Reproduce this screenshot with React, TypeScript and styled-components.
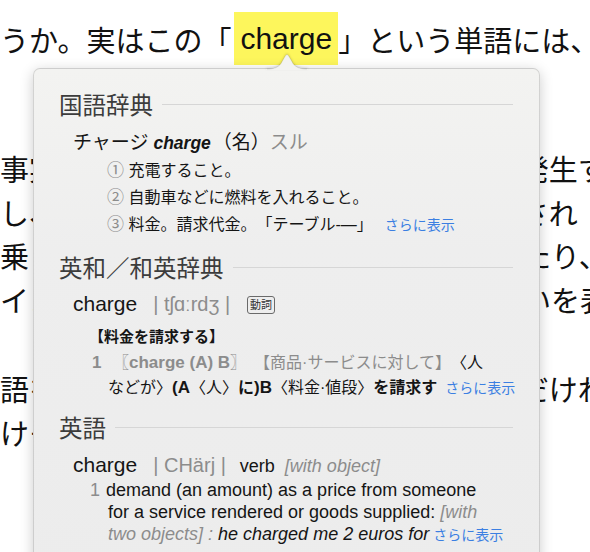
import React from "react";
import styled, { createGlobalStyle } from "styled-components";

const C = {
  ink: "#151515",
  head: "#3c3c3c",
  gray: "#8c8c8c",
  rule: "#d6d6d6",
  link: "#3b7fe2",
  yellow: "#fdf65c",
  popTop: "#f3f3f1",
};

const GlobalStyle = createGlobalStyle`
  html, body { margin: 0; padding: 0; background: #ffffff; }
  body {
    font-family: "Liberation Sans", "Noto Sans CJK JP", "DejaVu Sans", sans-serif;
    color: ${C.ink};
    text-spacing-trim: space-all;
  }
`;

const Page = styled.div`
  position: relative;
  width: 590px;
  height: 552px;
  overflow: hidden;
  background: #fff;
`;

/* ---------- background article ---------- */
const Article = styled.div`
  display: flex;
  flex-direction: column;
  padding-top: 12px;
  font-size: 29px;
  color: #111;
`;

const LeadLine = styled.div`
  display: flex;
  align-items: center;
  height: 53px;
  white-space: nowrap;
`;

const Highlight = styled.span`
  display: flex;
  align-items: center;
  height: 53px;
  margin-left: 3px;
  padding: 0 6px;
  background: ${C.yellow};
  font-size: 30px;
`;

const Line = styled.div<{ $gap?: number }>`
  height: 43.5px;
  line-height: 43.5px;
  white-space: nowrap;
  margin-top: ${(p) => p.$gap ?? 0}px;
`;

/* ---------- popover ---------- */
const Popover = styled.div`
  position: absolute;
  left: 33px;
  top: 68px;
  width: 507px;
  height: 520px;
  box-sizing: border-box;
  padding: 20px 26px 0 25px;
  border: 1px solid rgba(0, 0, 0, 0.13);
  border-radius: 7px;
  background: linear-gradient(180deg, ${C.popTop} 0%, #eeeeee 35%, #ececec 100%);
  box-shadow: 0 3px 14px rgba(0, 0, 0, 0.2);
`;

const Arrow = styled.svg`
  position: absolute;
  left: 233px;
  top: -16px;
  width: 40px;
  height: 17px;
  overflow: visible;
  filter: drop-shadow(0 -0.5px 0.8px rgba(0, 0, 0, 0.16));
`;

const SectionTitle = styled.div<{ $mt?: number }>`
  display: flex;
  align-items: center;
  gap: 9px;
  height: 30px;
  margin-top: ${(p) => p.$mt ?? 0}px;
  font-size: 23.5px;
  color: ${C.head};
  white-space: nowrap;
  &::after {
    content: "";
    flex: 1;
    height: 1px;
    margin-top: 1px;
    background: ${C.rule};
  }
`;

const EntryRow = styled.div<{ $mt: number; $h: number }>`
  margin-top: ${(p) => p.$mt}px;
  height: ${(p) => p.$h}px;
  line-height: ${(p) => p.$h}px;
  padding-left: 14px;
  white-space: nowrap;
`;

const Kana = styled.span<{ $muted?: boolean }>`
  font-size: 19px;
  color: ${(p) => (p.$muted ? C.gray : C.ink)};
`;

const HeadItalic = styled.span`
  font-size: 17.5px;
  font-weight: 700;
  font-style: italic;
  margin: 0 2px 0 5px;
`;

const SenseList = styled.div`
  padding-left: 48px;
  font-size: 16px;
  line-height: 27px;
`;

const Sense = styled.div`
  white-space: nowrap;
`;

const Circ = styled.span`
  font-size: 17px;
  color: ${C.gray};
`;

const More = styled.span<{ $ml: number }>`
  margin-left: ${(p) => p.$ml}px;
  font-size: 14px;
  font-style: normal;
  font-weight: 400;
  color: ${C.link};
`;

const Headword = styled.span`
  font-size: 21px;
`;

const Pron = styled.span`
  margin-left: 16px;
  font-size: 20px;
  color: ${C.gray};
`;

const Badge = styled.span`
  display: inline-block;
  margin-left: 17px;
  padding: 1px 2px;
  font-size: 11px;
  line-height: 14px;
  border: 1px solid #6a6a6a;
  border-radius: 3px;
  color: #333;
  vertical-align: 2px;
`;

const Pos = styled.span`
  margin-left: 14px;
  font-size: 18px;
`;

const Gram = styled.span<{ $ml?: number }>`
  margin-left: ${(p) => p.$ml ?? 0}px;
  font-size: 18px;
  font-style: italic;
  color: ${C.gray};
`;

const SenseLabel = styled.div`
  margin-top: 5px;
  height: 26px;
  line-height: 26px;
  padding-left: 30px;
  font-size: 15px;
  font-weight: 700;
`;

const DefLine = styled.div<{ $size: number; $lh: number; $mt?: number }>`
  margin-top: ${(p) => p.$mt ?? 0}px;
  padding-left: 49px;
  font-size: ${(p) => p.$size}px;
  line-height: ${(p) => p.$lh}px;
  white-space: nowrap;
`;

const Num = styled.span`
  display: inline-block;
  width: 21px;
  margin-left: -16px;
  font-size: 17px;
  font-weight: 700;
  color: ${C.gray};
`;

const GrayBold = styled.span`
  font-weight: 700;
  color: ${C.gray};
`;

const Muted = styled.span<{ $ml?: number }>`
  margin-left: ${(p) => p.$ml ?? 0}px;
  color: ${C.gray};
`;

const Bold = styled.span`
  font-weight: 700;
`;

const Lat = styled.span`
  font-size: 17px;
`;

const EnNum = styled.span`
  display: inline-block;
  width: 16px;
  margin-left: -18px;
  color: ${C.gray};
`;

const Example = styled.span`
  font-style: italic;
`;

export default function App() {
  return (
    <>
      <GlobalStyle />
      <Page>
        <Article>
          <LeadLine>
            うか。実はこの「<Highlight>charge</Highlight>」という単語には、
          </LeadLine>
          <Line $gap={85}>事実として、電気自動車の充電の問題は発生する</Line>
          <Line>し、その結果として、料金が別途に請求され</Line>
          <Line>乗り物に燃料を入れる際に料金を支払ったり、</Line>
          <Line>インターネットで様々なサービスの支払いを表す</Line>
          <Line $gap={46}>語を覚えておくと便利なのは確かなことだけれ</Line>
          <Line>けそれ以外の意味もあります</Line>
        </Article>

        <Popover>
          <Arrow viewBox="0 0 40 17">
            <path
              d="M-1 17 L-1 16 C7 16 11 14.5 14 10.5 L18.2 3 Q20 0 21.8 3 L26 10.5 C29 14.5 33 16 41 16 L41 17 Z"
              fill={C.popTop}
            />
            <path
              d="M0 16 C7 16 11 14.5 14 10.5 L18.2 3 Q20 0 21.8 3 L26 10.5 C29 14.5 33 16 40 16"
              fill="none"
              stroke="rgba(0,0,0,0.12)"
              strokeWidth="0.8"
            />
          </Arrow>

          <SectionTitle>国語辞典</SectionTitle>
          <EntryRow $mt={10} $h={28}>
            <Kana>チャージ</Kana>
            <HeadItalic>charge</HeadItalic>
            <Kana>（名）</Kana>
            <Kana $muted>スル</Kana>
          </EntryRow>
          <SenseList>
            <Sense>
              <Circ>①</Circ> 充電すること。
            </Sense>
            <Sense>
              <Circ>②</Circ> 自動車などに燃料を入れること。
            </Sense>
            <Sense>
              <Circ>③</Circ> 料金。請求代金。「テーブル-—」
              <More $ml={12}>さらに表示</More>
            </Sense>
          </SenseList>

          <SectionTitle $mt={13}>英和／和英辞典</SectionTitle>
          <EntryRow $mt={7} $h={30}>
            <Headword>charge</Headword>
            <Pron>| tʃɑːrdʒ |</Pron>
            <Badge>動詞</Badge>
          </EntryRow>
          <SenseLabel>【料金を請求する】</SenseLabel>
          <DefLine $size={16} $lh={25}>
            <Num>1</Num>
            <GrayBold>
              〖<Lat>charge (A) B</Lat>〗
            </GrayBold>
            <Muted $ml={8}>【商品·サービスに対して】</Muted>〈人
          </DefLine>
          <DefLine $size={16} $lh={25}>
            などが〉
            <Bold>
              <Lat>(A</Lat>
            </Bold>
            〈人〉
            <Bold>
              に<Lat>)B</Lat>
            </Bold>
            〈料金·値段〉<Bold>を請求す</Bold>
            <More $ml={8}>さらに表示</More>
          </DefLine>

          <SectionTitle $mt={11}>英語</SectionTitle>
          <EntryRow $mt={8} $h={30}>
            <Headword>charge</Headword>
            <Pron>| CHärj |</Pron>
            <Pos>verb</Pos>
            <Gram $ml={10}>[with object]</Gram>
          </EntryRow>
          <DefLine $size={18} $lh={22} $mt={-1}>
            <EnNum>1</EnNum>demand (an amount) as a price from someone
          </DefLine>
          <DefLine $size={18} $lh={22}>
            for a service rendered or goods supplied: <Gram>[with</Gram>
          </DefLine>
          <DefLine $size={18} $lh={22}>
            <Gram>two objects] :</Gram> <Example>he charged me 2 euros for</Example>
            <More $ml={4}>さらに表示</More>
          </DefLine>
        </Popover>
      </Page>
    </>
  );
}
